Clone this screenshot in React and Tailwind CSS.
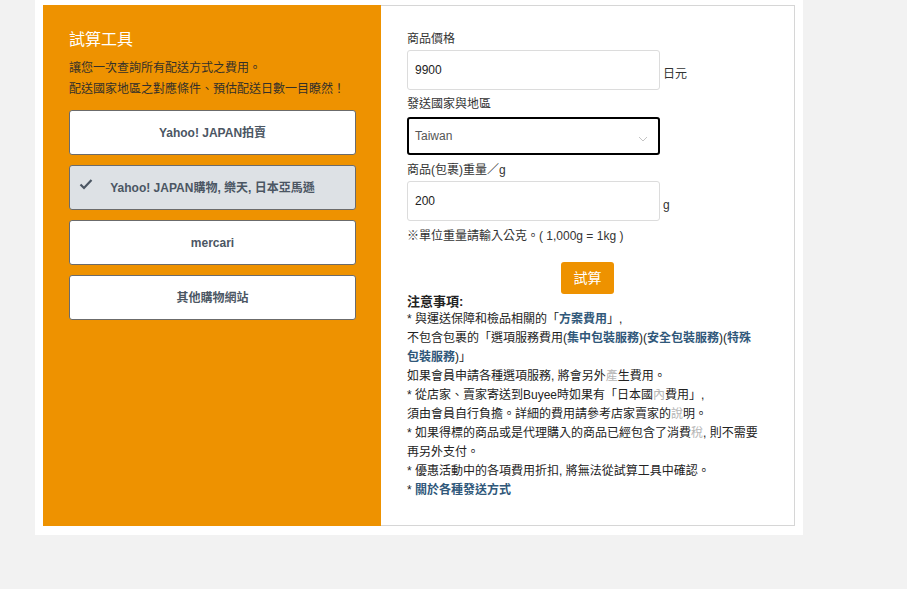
import React from 'react';

const sites = [
  { name: 'Yahoo! JAPAN拍賣' },
  { name: 'Yahoo! JAPAN購物, 樂天, 日本亞馬遜', active: true },
  { name: 'mercari' },
  { name: '其他購物網站' },
];

const font = { fontFamily: '"Liberation Sans", "Noto Sans CJK TC", sans-serif' };

const Check = () => (
  <svg width="14" height="12" viewBox="0 0 14 12" className="absolute left-[9px] top-[12px]">
    <path d="M1.5 6.5 L5 10 L12.5 2" fill="none" stroke="#4b5663" strokeWidth="2.2" />
  </svg>
);

const Chevron = () => (
  <svg width="10" height="6" viewBox="0 0 10 6" className="absolute right-[10px] top-[17px]">
    <path d="M1 1 L5 5 L9 1" fill="none" stroke="#c4c4c4" strokeWidth="1" />
  </svg>
);

const Field = ({ label, value, unit }) => (
  <div>
    <div className="text-[12px] leading-[20px] text-[#333]">{label}</div>
    <div className="flex items-center mt-[1px]">
      <div className="w-[253px] h-[40px] border border-[#dcdcdc] rounded-[3px] bg-white flex items-center px-[7px] text-[12px] text-[#222]">
        {value}
      </div>
      <span className="ml-[3px] pt-[8px] text-[12px] text-[#333]">{unit}</span>
    </div>
  </div>
);

const App = () => {
  return (
    <div className="min-h-screen bg-[#f2f2f2]" style={font}>
      <div className="ml-[35px] w-[768px] bg-white pt-[5px] pb-[9px] px-[8px]">
        <div className="flex border border-[#d6d6d6]">

          {/* left: tool intro + site selection */}
          <div className="w-[338px] -ml-px -my-px bg-[#ee9200] pt-[22px] pl-[26px] pr-[25px] shrink-0">
            <h2 className="text-[16px] leading-[26px] text-white font-normal">試算工具</h2>
            <div className="mt-[5px] text-[12px] leading-[21px] text-[#33302a]">
              <p>讓您一次查詢所有配送方式之費用。</p>
              <p>配送國家地區之對應條件、預估配送日數一目瞭然！</p>
            </div>
            <div className="mt-[10px] flex flex-col gap-[10px]">
              {sites.map((s) => (
                <button
                  key={s.name}
                  type="button"
                  className={`relative h-[45px] w-full rounded-[3px] border border-[#6b6b6b] text-[12px] font-bold text-[#4b5663] ${
                    s.active ? 'bg-[#dde1e5]' : 'bg-white'
                  }`}
                >
                  {s.active && <Check />}
                  {s.name}
                </button>
              ))}
            </div>
          </div>

          {/* right: form */}
          <div className="flex-1 pt-[23px] pl-[26px] pr-[26px] pb-[25px]">
            <Field label="商品價格" value="9900" unit="日元" />

            <div className="mt-[4px]">
              <div className="text-[12px] leading-[20px] text-[#333]">發送國家與地區</div>
              <div className="relative mt-[3px] w-[253px] h-[38px] border-2 border-black rounded-[3px] flex items-center px-[6px] text-[12px] text-[#555]">
                Taiwan
                <Chevron />
              </div>
            </div>

            <div className="mt-[5px]">
              <Field label="商品(包裹)重量／g" value="200" unit="g" />
            </div>

            <p className="mt-[5px] text-[12px] leading-[20px] text-[#333]">※單位重量請輸入公克。( 1,000g = 1kg )</p>

            <div className="mt-[16px] flex justify-center">
              <button type="button" className="w-[53px] h-[32px] rounded-[3px] bg-[#ee9200] text-white text-[14px]">試算</button>
            </div>

            <div className="w-[354px] text-[12px] text-[#222]">
              <h3 className="font-bold text-[13px] leading-[16px] text-[#222]">注意事項:</h3>
              <div className="leading-[19px]">
                <p>* 與運送保障和檢品相關的「<b className="text-[#30587a]">方案費用</b>」,</p>
                <p>
                  不包含包裹的「選項服務費用(<b className="text-[#30587a]">集中包裝服務</b>)(<b className="text-[#30587a]">安全包裝服務</b>)(<b className="text-[#30587a]">特殊包裝服務</b>)」
                </p>
                <p>如果會員申請各種選項服務, 將會另外<span className="text-[#b5b5b5]">產</span>生費用。</p>
                <p>* 從店家、賣家寄送到Buyee時如果有「日本國<span className="text-[#b5b5b5]">內</span>費用」,</p>
                <p>須由會員自行負擔。詳細的費用請參考店家賣家的<span className="text-[#b5b5b5]">說</span>明。</p>
                <p>* 如果得標的商品或是代理購入的商品已經包含了消費<span className="text-[#b5b5b5]">稅</span>, 則不需要再另外支付。</p>
                <p>* 優惠活動中的各項費用折扣, 將無法從試算工具中確認。</p>
                <p>* <b className="text-[#30587a]">關於各種發送方式</b></p>
              </div>
            </div>
          </div>

        </div>
      </div>
    </div>
  );
};

export default App;
